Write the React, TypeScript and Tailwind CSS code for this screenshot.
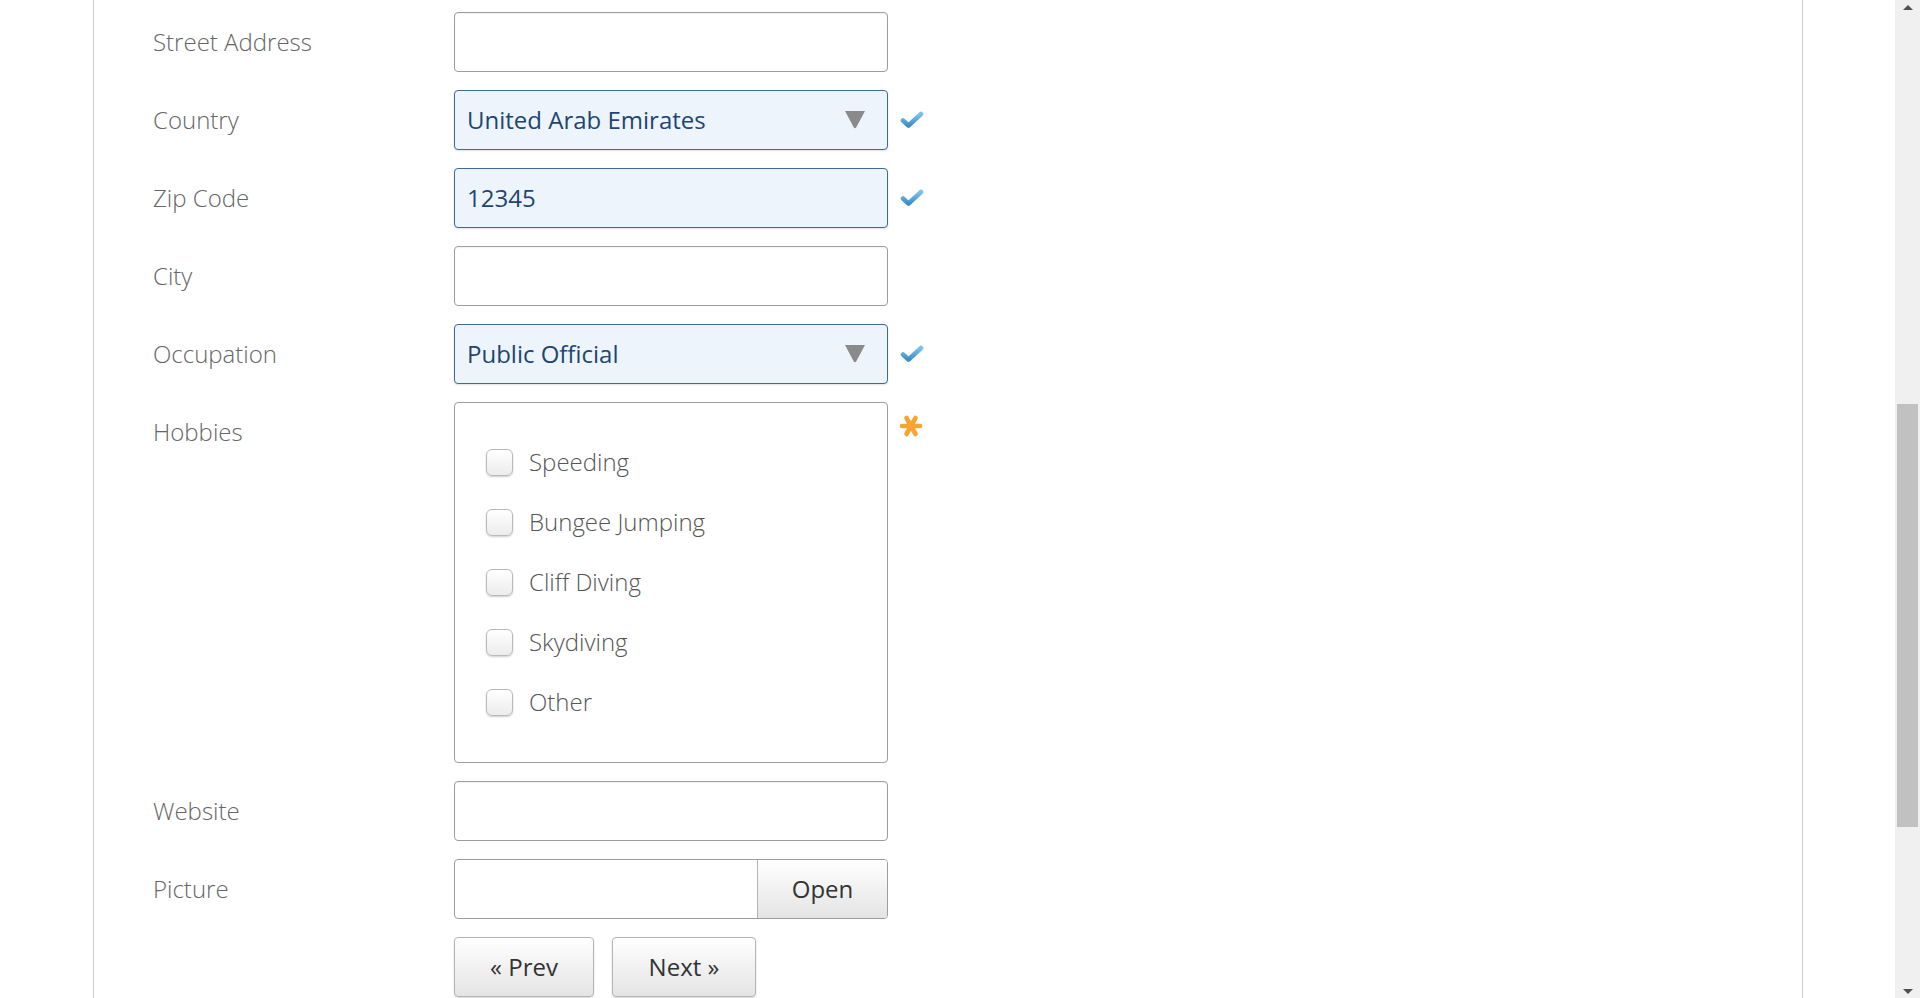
import React from 'react';

const Check: React.FC = () => (
  <svg width="24" height="18" viewBox="0 0 24 18">
    <defs>
      <linearGradient id="chk" x1="0" y1="0" x2="0" y2="1">
        <stop offset="0" stopColor="#7cc3ec" />
        <stop offset="1" stopColor="#3b8fc9" />
      </linearGradient>
    </defs>
    <path d="M3 9.5 L8.5 14.5 L21 3" fill="none" stroke="url(#chk)" strokeWidth="4.6" strokeLinecap="round" strokeLinejoin="round" />
  </svg>
);

const Asterisk: React.FC = () => (
  <svg width="24" height="24" viewBox="0 0 24 24">
    <g stroke="#f7a532" strokeWidth="4.6" strokeLinecap="round">
      <line x1="3" y1="12" x2="21" y2="12" />
      <line x1="7.5" y1="4" x2="16.5" y2="20" />
      <line x1="16.5" y1="4" x2="7.5" y2="20" />
    </g>
  </svg>
);

const Caret: React.FC = () => (
  <svg width="20" height="18" viewBox="0 0 20 18">
    <path d="M0 0 H20 L11.2 16.6 Q10 18 8.8 16.6 Z" fill="#8a8a8a" />
  </svg>
);

const labelCls = 'w-[360px] h-[60px] flex items-center pl-[59px] text-[24px] font-light text-[#666]';

const Row: React.FC<{ label: string; icon?: React.ReactNode; children: React.ReactNode }> = ({ label, icon, children }) => (
  <div className="flex items-start">
    <div className={labelCls}>{label}</div>
    <div className="w-[434px]">{children}</div>
    {icon && <div className="ml-[12px] h-[60px] flex items-center">{icon}</div>}
  </div>
);

const TextBox: React.FC = () => (
  <div className="h-[60px] rounded-[4px] border border-[#9d9d9d] bg-white shadow-[inset_0_1px_2px_rgba(0,0,0,0.06)]" />
);

const FilledBox: React.FC<{ value: string; select?: boolean }> = ({ value, select }) => (
  <div className="h-[60px] rounded-[4px] border border-[#3a6a9e] bg-[#edf4fc] flex items-center justify-between pl-[12px] pr-[22px] text-[24px] text-[#1d4673] shadow-[0_1px_2px_rgba(0,0,0,0.12)]">
    <span>{value}</span>
    {select && <Caret />}
  </div>
);

const hobbies = ['Speeding', 'Bungee Jumping', 'Cliff Diving', 'Skydiving', 'Other'];

const btn =
  'h-[60px] rounded-[4px] border border-[#b4b4b4] bg-gradient-to-b from-white to-[#e4e4e4] text-[24px] text-[#333] flex items-center justify-center shadow-[0_1px_2px_rgba(0,0,0,0.15)]';

export default function App() {
  return (
    <div className="flex w-[1920px] h-[998px] overflow-hidden bg-white font-['Open_Sans','Noto_Sans',sans-serif]">
      <div className="w-[1895px] h-full pl-[93px]">
        <div className="w-[1710px] h-full border-l border-r border-[#cbcbcb] pt-[12px] flex flex-col gap-[18px]">
          <Row label="Street Address">
            <TextBox />
          </Row>
          <Row label="Country" icon={<Check />}>
            <FilledBox value="United Arab Emirates" select />
          </Row>
          <Row label="Zip Code" icon={<Check />}>
            <FilledBox value="12345" />
          </Row>
          <Row label="City">
            <TextBox />
          </Row>
          <Row label="Occupation" icon={<Check />}>
            <FilledBox value="Public Official" select />
          </Row>
          <div className="flex items-start">
            <div className={labelCls}>Hobbies</div>
            <div className="w-[434px] h-[361px] rounded-[4px] border border-[#9d9d9d] bg-white pt-[29px] pl-[31px]">
              {hobbies.map((h) => (
                <div key={h} className="h-[60px] flex items-center">
                  <div className="w-[27px] h-[27px] rounded-[6px] border border-[#b9b9b9] bg-gradient-to-b from-white to-[#ececec] shadow-[0_1px_2px_rgba(0,0,0,0.2)]" />
                  <span className="ml-[16px] text-[24px] font-light text-[#555]">{h}</span>
                </div>
              ))}
            </div>
            <div className="ml-[11px] mt-[12px]">
              <Asterisk />
            </div>
          </div>
          <Row label="Website">
            <TextBox />
          </Row>
          <Row label="Picture">
            <div className="h-[60px] flex rounded-[4px] border border-[#9d9d9d] bg-white overflow-hidden">
              <div className="flex-1" />
              <div className="w-[130px] border-l border-[#b4b4b4] bg-gradient-to-b from-white to-[#e4e4e4] text-[24px] text-[#333] flex items-center justify-center">
                Open
              </div>
            </div>
          </Row>
          <div className="flex pl-[360px] gap-[18px]">
            <div className={`${btn} w-[140px]`}>« Prev</div>
            <div className={`${btn} w-[144px]`}>Next »</div>
          </div>
        </div>
      </div>
      <div className="w-[25px] h-full bg-[#f0f0f0] flex flex-col items-center">
        <div className="h-[14px] flex items-center">
          <div className="w-0 h-0 border-l-[5px] border-r-[5px] border-b-[5px] border-l-transparent border-r-transparent border-b-[#505050]" />
        </div>
        <div className="mt-[390px] w-[21px] h-[423px] bg-[#c1c1c1]" />
        <div className="flex-1" />
        <div className="h-[14px] flex items-center">
          <div className="w-0 h-0 border-l-[5px] border-r-[5px] border-t-[5px] border-l-transparent border-r-transparent border-t-[#505050]" />
        </div>
      </div>
    </div>
  );
}
